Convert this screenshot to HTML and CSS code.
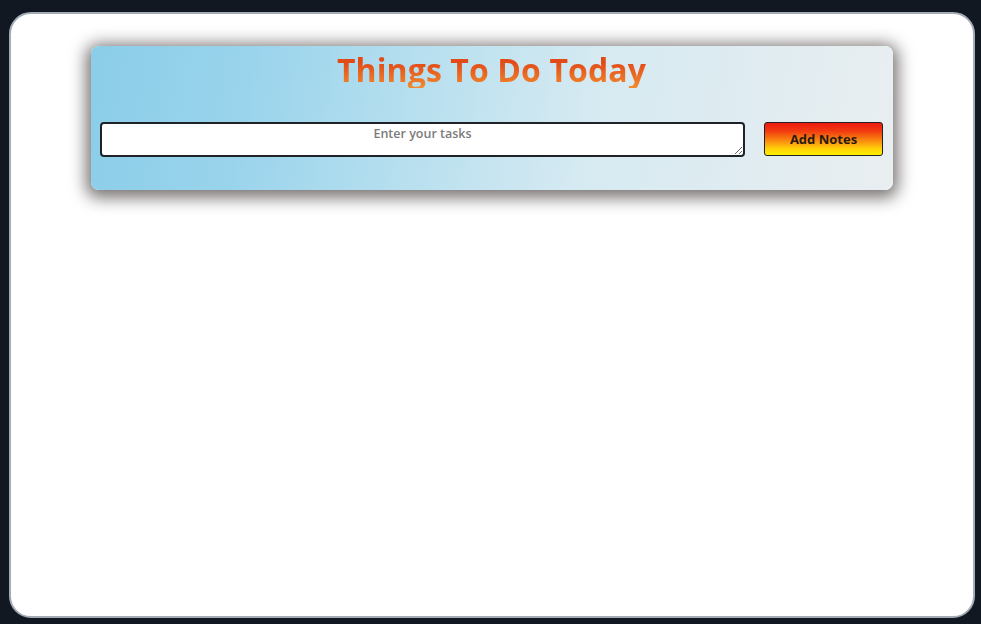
FILE: index.html
```html
<!DOCTYPE html>
<html lang="en">
<head>
<meta charset="utf-8">
<title>Things To Do Today</title>
<link rel="stylesheet" href="styles.css">
</head>
<body>
<div class="frame">
  <section class="panel">
    <h1 class="title">Things To Do Today</h1>
    <div class="entry">
      <textarea class="task-input" placeholder="Enter your tasks"></textarea>
      <button class="add-btn">Add Notes</button>
    </div>
  </section>
</div>
</body>
</html>
```

FILE: styles.css
```css
* { box-sizing: border-box; }
html, body { height: 100%; }
body {
  margin: 0;
  background: #111822;
  padding: 12px 6px 6px 9px;
  font-family: "Open Sans", "Liberation Sans", sans-serif;
}
.frame {
  height: 100%;
  background: #ffffff;
  border: 2px solid #a3abb6;
  border-radius: 22px;
  padding: 32px 80px 0 80px;
}
.panel {
  height: 144px;
  border-radius: 8px;
  background: linear-gradient(100deg, #8bcde8 0%, #9ad4ec 20%, #b9e0ef 42%, #d6eaf2 62%, #e9eef0 100%);
  box-shadow: 0 3px 16px 5px rgba(35, 25, 25, 0.6);
  padding: 6px 10px 0 9px;
}
.title {
  margin: 0;
  text-align: center;
  font-size: 32px;
  font-weight: 700;
  line-height: 36px;
  letter-spacing: 0.1px;
  background: linear-gradient(180deg, #e24b18 30%, #f38b2e 100%);
  -webkit-background-clip: text;
  background-clip: text;
  color: transparent;
}
.entry {
  display: flex;
  align-items: flex-start;
  gap: 19px;
  margin-top: 34px;
}
.task-input {
  flex: 1;
  height: 35px;
  border: 2px solid #1f2328;
  border-radius: 4px;
  background: #fff;
  text-align: center;
  font-family: "Open Sans", sans-serif;
  font-size: 12.5px;
  padding: 1px 4px;
  resize: vertical;
}
.task-input::placeholder { color: #7c7c7c; font-weight: 600; }
.add-btn {
  width: 119px;
  height: 34px;
  border: 1.5px solid #222;
  border-radius: 3px;
  background: linear-gradient(180deg, #ee1a10 0%, #f23a10 25%, #fa8a10 55%, #ffd008 80%, #fff000 100%);
  font-family: "Open Sans", sans-serif;
  font-weight: 700;
  font-size: 13px;
  color: #2a1a10;
  padding: 0;
}
```
